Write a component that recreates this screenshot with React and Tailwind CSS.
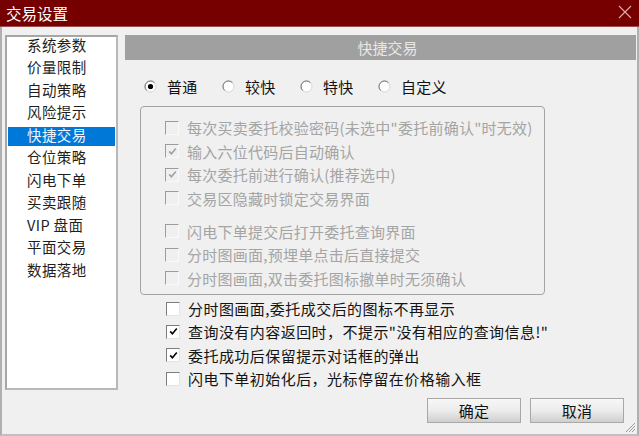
import React from "react";

const listItems = ["系统参数","价量限制","自动策略","风险提示","快捷交易","仓位策略","闪电下单","买卖跟随","VIP 盘面","平面交易","数据落地"];

const groupRows = [
  { t: '每次买卖委托校验密码(未选中"委托前确认"时无效)', c: false },
  { t: "输入六位代码后自动确认", c: true },
  { t: "每次委托前进行确认(推荐选中)", c: true },
  { t: "交易区隐藏时锁定交易界面", c: false },
];
const groupRows2 = [
  { t: "闪电下单提交后打开委托查询界面", c: false },
  { t: "分时图画面,预埋单点击后直接提交", c: false },
  { t: "分时图画面,双击委托图标撤单时无须确认", c: false },
];
const bottomRows = [
  { t: "分时图画面,委托成交后的图标不再显示", c: false },
  { t: '查询没有内容返回时，不提示"没有相应的查询信息!"', c: true },
  { t: "委托成功后保留提示对话框的弹出", c: true },
  { t: "闪电下单初始化后，光标停留在价格输入框", c: false },
];

function Radio({ checked }) {
  return (
    <svg width="13" height="13" viewBox="0 0 13 13" className="shrink-0">
      <circle cx="6.5" cy="6.5" r="5.5" fill="#fff" stroke="#d4d4d4" />
      <path d="M2.6 10.4 A5.5 5.5 0 0 1 10.4 2.6" fill="none" stroke="#6e6e6e" />
      {checked && <circle cx="6.5" cy="6.5" r="2.6" fill="#000" />}
    </svg>
  );
}

function Check({ checked, disabled }) {
  return (
    <span
      className={
        disabled
          ? "w-[14px] h-[14px] shrink-0 flex items-center justify-center border border-l-[#9c9c9c] border-t-[#9c9c9c] border-r-[#fafafa] border-b-[#fafafa] bg-[#f0f0f0]"
          : "w-[14px] h-[14px] shrink-0 flex items-center justify-center border border-l-[#7c7c7c] border-t-[#7c7c7c] border-r-[#e4e4e4] border-b-[#e4e4e4] bg-white"
      }
    >
      {checked && (
        <svg width="9" height="9" viewBox="0 0 9 9">
          <path d="M1.2 4.4 L3.4 6.8 L7.8 1.6" fill="none" stroke={disabled ? "#a0a0a0" : "#000"} strokeWidth="1.6" />
        </svg>
      )}
    </span>
  );
}

function GroupRow({ t, c }) {
  return (
    <div className="h-[23.5px] flex items-center gap-[8px]">
      <Check checked={c} disabled />
      <span className="text-[#a4a4a4] text-[15px] leading-none tracking-[0.25px] whitespace-nowrap">{t}</span>
    </div>
  );
}

export default function App() {
  return (
    <div className="w-[639px] h-[436px] flex flex-col bg-[#f0f0f0] overflow-hidden font-['Noto_Sans_CJK_SC',sans-serif] relative">
      <div className="h-[27px] bg-[#760000] flex items-center justify-between pl-[6px] pr-[7px] border-b border-[#9a5050]">
        <span className="text-white text-[15.5px] leading-none pt-[2px]">交易设置</span>
        <svg width="14" height="14" viewBox="0 0 14 14" className="mb-[3px]">
          <path d="M1 1 L13 13 M13 1 L1 13" stroke="#d6b0b0" strokeWidth="1.1" />
        </svg>
      </div>
      <div className="flex-1 flex border-l-2 border-r-2 border-b-2 border-l-[#b0b0b0] border-r-[#b0b0b0] border-b-[#c0c0c0]">
        {/* left list */}
        <div className="ml-[3px] mt-[8px] w-[113px] h-[355px] bg-white border-2 border-t-[#a6a6a6] border-l-[#a6a6a6] border-r-[#b8b8b8] border-b-[#b8b8b8] pl-[1px] pr-[1px] shrink-0">
          {listItems.map((it, i) => (
            <div
              key={it}
              className={
                i === 4
                  ? "h-[19px] mb-[3.5px] flex items-center pb-[3px] pl-[19px] bg-[#0078d7] text-[#eef4ff] text-[14.5px] tracking-[0.4px] leading-none"
                  : "h-[19px] mb-[3.5px] flex items-center pb-[3px] pl-[19px] text-[#1e1e1e] text-[14.5px] tracking-[0.4px] leading-none"
              }
            >
              {it}
            </div>
          ))}
        </div>
        {/* right panel */}
        <div className="ml-[7px] mt-[8px] w-[511px] flex flex-col">
          <div className="h-[25px] bg-[#a0a0a0] flex items-center justify-center pl-[14px] text-[#e8e8e8] text-[15px] leading-none">
            快捷交易
          </div>
          <div className="mt-[18px] h-[17px] flex items-center pl-[19px]">
            {[
              ["普通", true],
              ["较快", false],
              ["特快", false],
              ["自定义", false],
            ].map(([l, c]) => (
              <div key={l} className="w-[78px] flex items-center gap-[10px]">
                <Radio checked={c} />
                <span className="text-[15px] leading-none tracking-[0.3px] text-[#111]">{l}</span>
              </div>
            ))}
          </div>
          <div className="mt-[11px] ml-[15px] w-[405px] h-[189px] border border-[#a4a4a4] rounded-[4px] pt-[9px] pl-[24px] flex flex-col">
            {groupRows.map((r) => (
              <GroupRow key={r.t} {...r} />
            ))}
            <div className="h-[9.5px]" />
            {groupRows2.map((r) => (
              <GroupRow key={r.t} {...r} />
            ))}
          </div>
          <div className="mt-[2px] pl-[41px] flex flex-col">
            {bottomRows.map((r) => (
              <div key={r.t} className="h-[23.3px] flex items-center gap-[8px]">
                <Check checked={r.c} />
                <span className="text-[15px] leading-none tracking-[0.45px] text-[#141414] whitespace-nowrap">{r.t}</span>
              </div>
            ))}
          </div>
          <div className="mt-[8px] flex justify-end gap-[9px] pr-[12px]">
            {["确定", "取消"].map((b) => (
              <div
                key={b}
                className="w-[94px] h-[25px] border border-[#a8a8a8] bg-linear-to-b from-[#f7f7f7] via-[#ececec] to-[#cfcfcf] flex items-center justify-center text-[15px] leading-none tracking-[0.3px] text-[#111]"
              >
                {b}
              </div>
            ))}
          </div>
        </div>
      </div>
      <svg width="12" height="12" viewBox="0 0 12 12" className="absolute right-[3px] bottom-[3px]">
        <path d="M11 2 L2 11 M11 5 L5 11 M11 8 L8 11" stroke="#9c9c9c" strokeWidth="1" />
      </svg>
    </div>
  );
}
